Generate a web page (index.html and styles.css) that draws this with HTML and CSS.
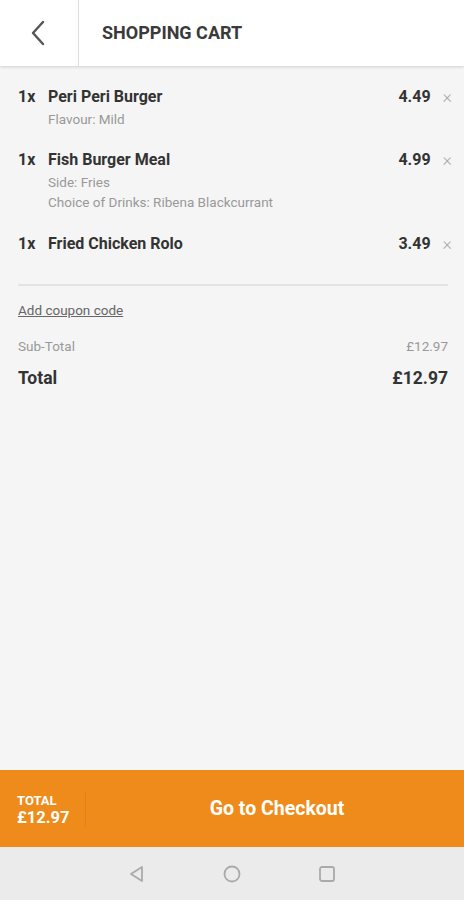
FILE: index.html
```html
<!DOCTYPE html>
<html lang="en">
<head>
    <meta charset="UTF-8">
    <meta name="viewport" content="width=device-width, initial-scale=1.0">
    <title>Shopping Cart</title>
    <link rel="stylesheet" href="styles.css">
</head>
<body>
    <div class="screen">
        <header class="topbar">
            <div class="back">
                <svg width="16" height="26" viewBox="0 0 16 26">
                    <path d="M13 2 L3 13 L13 24" fill="none" stroke="#555" stroke-width="2.4" stroke-linecap="round" stroke-linejoin="round"/>
                </svg>
            </div>
            <h1 class="title">SHOPPING CART</h1>
        </header>

        <main class="cart">
            <div class="item">
                <div class="item-row">
                    <span class="qty">1x</span>
                    <span class="name">Peri Peri Burger</span>
                    <span class="price">4.49</span>
                    <span class="remove">&times;</span>
                </div>
                <div class="opt">Flavour: Mild</div>
            </div>

            <div class="item">
                <div class="item-row">
                    <span class="qty">1x</span>
                    <span class="name">Fish Burger Meal</span>
                    <span class="price">4.99</span>
                    <span class="remove">&times;</span>
                </div>
                <div class="opt">Side: Fries</div>
                <div class="opt">Choice of Drinks: Ribena Blackcurrant</div>
            </div>

            <div class="item">
                <div class="item-row">
                    <span class="qty">1x</span>
                    <span class="name">Fried Chicken Rolo</span>
                    <span class="price">3.49</span>
                    <span class="remove">&times;</span>
                </div>
            </div>

            <hr class="divider">

            <a class="coupon" href="#">Add coupon code</a>

            <div class="sum-row sub">
                <span>Sub-Total</span>
                <span>£12.97</span>
            </div>
            <div class="sum-row total">
                <span>Total</span>
                <span>£12.97</span>
            </div>
        </main>

        <div class="checkout">
            <div class="checkout-total">
                <span class="label">TOTAL</span>
                <span class="amount">£12.97</span>
            </div>
            <div class="checkout-btn">Go to Checkout</div>
        </div>

        <nav class="sysnav">
            <svg width="20" height="20" viewBox="0 0 20 20">
                <path d="M15 3 L4 10 L15 17 Z" fill="none" stroke="#aaa" stroke-width="1.8" stroke-linejoin="round"/>
            </svg>
            <svg width="20" height="20" viewBox="0 0 20 20">
                <circle cx="10" cy="10" r="7.5" fill="none" stroke="#aaa" stroke-width="1.8"/>
            </svg>
            <svg width="20" height="20" viewBox="0 0 20 20">
                <rect x="3" y="3" width="14" height="14" rx="2" fill="none" stroke="#aaa" stroke-width="1.8"/>
            </svg>
        </nav>
    </div>
</body>
</html>
```

FILE: styles.css
```css
* {
    box-sizing: border-box;
    margin: 0;
    padding: 0;
}

body {
    font-family: Roboto, "Liberation Sans", sans-serif;
    background-color: #f5f5f5;
    color: #333;
}

.screen {
    display: flex;
    flex-direction: column;
    height: 900px;
}

.topbar {
    display: flex;
    align-items: center;
    height: 66px;
    background-color: #fff;
    box-shadow: 0 1px 3px rgba(0, 0, 0, 0.15);
    position: relative;
    z-index: 1;
}

.back {
    width: 79px;
    height: 100%;
    display: flex;
    align-items: center;
    justify-content: center;
    border-right: 1px solid #ddd;
    padding-right: 2px;
}

.title {
    font-size: 18px;
    font-weight: 700;
    color: #3a3a3a;
    margin-left: 23px;
    margin-bottom: 2px;
}

.cart {
    flex: 1;
    padding: 17px 12px 0 18px;
}

.item {
    margin-bottom: 18px;
}

.item:nth-child(2) {
    margin-top: -1px;
}

.item-row {
    display: flex;
    align-items: center;
    height: 26px;
    font-size: 16px;
    font-weight: 700;
    color: #333;
}

.qty {
    width: 30px;
}

.name {
    flex: 1;
}

.price {
    margin-right: 12px;
}

.remove {
    font-size: 18px;
    font-weight: 300;
    color: #aaa;
}

.opt {
    font-size: 13.5px;
    color: #999;
    line-height: 20px;
    margin-left: 30px;
}

.divider {
    border: none;
    border-top: 2px solid #e3e3e3;
    margin: 28px 4px 16px 0;
}

.coupon {
    display: block;
    font-size: 13.5px;
    line-height: 16px;
    color: #666;
    text-decoration: underline;
    margin-bottom: 18px;
}

.sum-row {
    display: flex;
    justify-content: space-between;
    align-items: center;
    padding-right: 4px;
}

.sub {
    font-size: 13.5px;
    color: #999;
    height: 20px;
    margin-bottom: 10px;
}

.total {
    font-size: 17.5px;
    font-weight: 700;
    color: #333;
    height: 24px;
}

.checkout {
    display: flex;
    align-items: center;
    height: 77px;
    background-color: #ee8b1b;
    color: #fff;
}

.checkout-total {
    display: flex;
    flex-direction: column;
    width: 86px;
    padding-left: 17px;
    border-right: 1px solid #e48314;
    font-weight: 700;
    padding-top: 2px;
}

.checkout-total .label {
    font-size: 13px;
    line-height: 15px;
}

.checkout-total .amount {
    font-size: 16.5px;
    line-height: 19px;
}

.checkout-btn {
    flex: 1;
    text-align: center;
    font-size: 19.5px;
    font-weight: 700;
    padding-left: 4px;
}

.sysnav {
    display: flex;
    justify-content: center;
    align-items: center;
    gap: 75px;
    height: 53px;
    background-color: #ebebeb;
}
```
